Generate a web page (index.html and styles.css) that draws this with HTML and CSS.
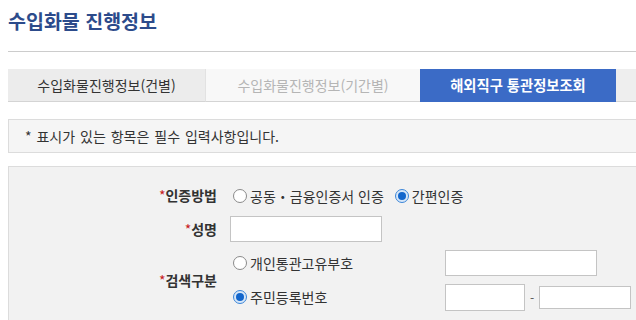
FILE: index.html
```html
<!DOCTYPE html>
<html lang="ko">
<head>
<meta charset="utf-8">
<title>수입화물 진행정보</title>
<link rel="stylesheet" href="styles.css">
</head>
<body>
<div class="page">
  <div class="header">
    <h1 class="title">수입화물 진행정보</h1>
  </div>
  <div class="tabs">
    <div class="tab tab-normal">수입화물진행정보(건별)</div>
    <div class="tab tab-light">수입화물진행정보(기간별)</div>
    <div class="tab tab-active">해외직구 통관정보조회</div>
    <div class="tab tab-rest"></div>
  </div>
  <div class="note">* 표시가 있는 항목은 필수 입력사항입니다.</div>
  <div class="form">
    <div class="label row1"><span class="req">*</span>인증방법</div>
    <div class="field row1">
      <label class="radio"><span class="rb"></span>공동・금융인증서 인증</label>
      <label class="radio radio-2"><span class="rb checked"></span>간편인증</label>
    </div>
    <div class="label row2"><span class="req">*</span>성명</div>
    <div class="field row2"><span class="input w152"></span></div>
    <div class="label row34"><span class="req">*</span>검색구분</div>
    <div class="field row3">
      <label class="radio opt"><span class="rb"></span>개인통관고유부호</label>
      <span class="input w152"></span>
    </div>
    <div class="field row4">
      <label class="radio opt"><span class="rb checked"></span>주민등록번호</label>
      <span class="input w80"></span>
      <span class="dash">-</span>
      <span class="input w92"></span>
    </div>
  </div>
</div>
</body>
</html>
```
FILE: styles.css
```css
html, body {
  margin: 0;
  padding: 0;
  overflow: hidden;
  background: #fff;
}
body {
  font-family: "Noto Sans CJK KR", "Noto Sans", sans-serif;
  color: #333;
  font-size: 14px;
}
.page {
  width: 720px;
  padding: 0 0 0 8px;
}
.header {
  padding-top: 8px;
  padding-bottom: 18px;
  border-bottom: 1px solid #cccccc;
}
.title {
  margin: 0;
  font-size: 19.5px;
  line-height: 25px;
  font-weight: bold;
  color: #2c4b8b;
}
.tabs {
  margin-top: 17px;
  display: flex;
  height: 33px;
}
.tab {
  box-sizing: border-box;
  height: 33px;
  line-height: 32px;
  text-align: center;
  font-size: 14px;
  border-bottom: 1px solid #d4d4d4;
}
.tab-normal {
  width: 198px;
  background: #ececec;
  color: #333;
  border-right: 1px solid #e2e2e2;
}
.tab-light {
  width: 214px;
  background: #f8f8f8;
  color: #b5b5b5;
}
.tab-active {
  width: 196px;
  background: #3b6bc6;
  color: #fff;
  font-size: 14.3px;
  font-weight: bold;
  border-bottom-color: #3b6bc6;
}
.tab-rest {
  flex: 1;
  background: #eeeeee;
}
.note {
  margin-top: 17px;
  box-sizing: border-box;
  height: 34px;
  line-height: 32px;
  padding-left: 16px;
  background: #f5f5f5;
  border: 1px solid #dcdcdc;
  border-right: none;
  font-size: 14px;
  word-spacing: 1px;
  color: #333;
}
.form {
  margin-top: 13px;
  background: #f2f2f2;
  border: 1px solid #dcdcdc;
  border-right: none;
  padding-top: 15px;
  padding-bottom: 20px;
  display: grid;
  grid-template-columns: 208px 1fr;
  grid-template-rows: 26px 26px 26px 26px;
  row-gap: 8px;
  column-gap: 13px;
}
.label {
  font-weight: bold;
  text-align: right;
  font-size: 14px;
  color: #333;
  display: flex;
  align-items: center;
  justify-content: flex-end;
}
.req {
  color: #c8201e;
  font-weight: normal;
}
.row1 { grid-row: 1; }
.row2 { grid-row: 2; }
.row3 { grid-row: 3; }
.row4 { grid-row: 4; }
.row34 { grid-row: 3 / span 2; grid-column: 1; }
.label.row1, .label.row2 { grid-column: 1; }
.field {
  grid-column: 2;
  display: flex;
  align-items: center;
}
.row1.field { margin-top: 1px; }
.radio {
  display: flex;
  align-items: center;
  font-size: 14px;
  color: #333;
}
.radio-2 { margin-left: 8px; }
.opt { width: 215px; }
.rb {
  box-sizing: border-box;
  width: 14px;
  height: 14px;
  border-radius: 50%;
  border: 1px solid #8a8a8a;
  background: #fff;
  margin: 0 3px 0 3px;
  position: relative;
}
.rb.checked {
  border-color: #3c86d8;
  background: #d7e7f8;
}
.rb.checked::after {
  content: "";
  position: absolute;
  left: 2px;
  top: 2px;
  width: 8px;
  height: 8px;
  border-radius: 50%;
  background: #1266cc;
}
.input {
  box-sizing: border-box;
  display: block;
  height: 26px;
  background: #fff;
  border: 1px solid #c4c4c4;
}
.w152 { width: 152px; }
.w80 { width: 80px; height: 27px; }
.w92 { width: 92px; height: 23px; }
.dash {
  width: 14px;
  text-align: center;
  color: #555;
  font-size: 12px;
}
```
